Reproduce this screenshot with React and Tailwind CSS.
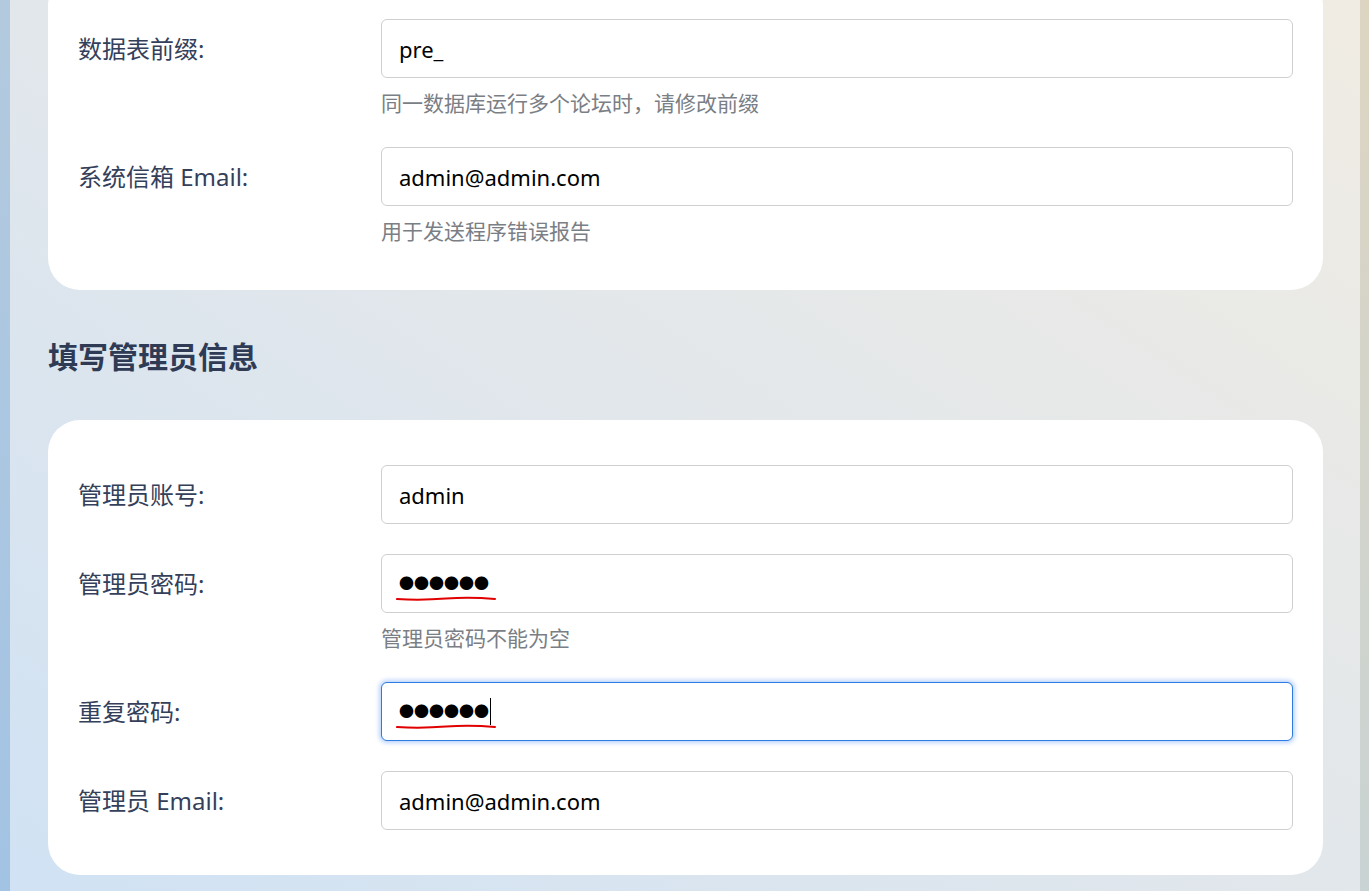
import React from "react";

const font = { fontFamily: '"Noto Sans", "Noto Sans CJK SC", sans-serif' };

function Field({ label, value, help, focused, password }) {
  return (
    <div className="flex flex-col">
      <div className="flex items-center">
        <div className="w-[303px] shrink-0 text-[24px] text-[#34405a] leading-none">{label}</div>
        <div
          className={
            "relative flex-1 h-[59px] rounded-[6px] bg-white flex items-center px-[17px] text-[22px] text-black " +
            (focused
              ? "border border-[#2b7be0] shadow-[0_0_4px_2px_rgba(59,130,246,0.35)]"
              : "border border-[#cfcfcf]")
          }
        >
          {password ? (
            <>
              <span className="text-[15px] tracking-[0px] leading-none">●●●●●●</span>
              {focused && <span className="ml-[1px] w-[1px] h-[27px] bg-black" />}
              <svg className="absolute left-[14px] top-[40px]" width="100" height="8" viewBox="0 0 100 8">
                <path d="M1 4 Q 25 5.5 50 3.5 Q 75 2 99 4" fill="none" stroke="#e00000" strokeWidth="2" strokeLinecap="round" />
              </svg>
            </>
          ) : (
            <span className="leading-none">{value}</span>
          )}
        </div>
      </div>
      {help && (
        <div className="ml-[303px] mt-[12px] text-[21px] text-[#7a7e85] leading-[27px]">{help}</div>
      )}
    </div>
  );
}

export default function App() {
  return (
    <div className="flex h-[891px] w-full overflow-hidden" style={font}>
      <div className="w-[10px] shrink-0 bg-linear-to-b from-[#b3cade] to-[#a3c3e4]" />
      <div className="flex-1 bg-linear-to-bl from-[#f0ece3] via-[#e2e7eb] to-[#d0e2f4] pl-[38px] pr-[37px]">
        <div className="-mt-[26px] bg-white rounded-[32px] px-[30px] pt-[45px] pb-[45px] flex flex-col gap-[30px]">
          <Field label="数据表前缀:" value="pre_" help="同一数据库运行多个论坛时，请修改前缀" />
          <Field label="系统信箱 Email:" value="admin@admin.com" help="用于发送程序错误报告" />
        </div>
        <h2 className="mt-[50px] mb-[46px] text-[30px] font-bold text-[#2f3b55] leading-[34px]">
          填写管理员信息
        </h2>
        <div className="bg-white rounded-[32px] px-[30px] pt-[45px] pb-[45px] flex flex-col gap-[30px]">
          <Field label="管理员账号:" value="admin" />
          <Field label="管理员密码:" password help="管理员密码不能为空" />
          <Field label="重复密码:" password focused />
          <Field label="管理员 Email:" value="admin@admin.com" />
        </div>
      </div>
      <div className="w-[9px] shrink-0 bg-linear-to-b from-[#ddd5c2] to-[#c9d3d3]" />
    </div>
  );
}
